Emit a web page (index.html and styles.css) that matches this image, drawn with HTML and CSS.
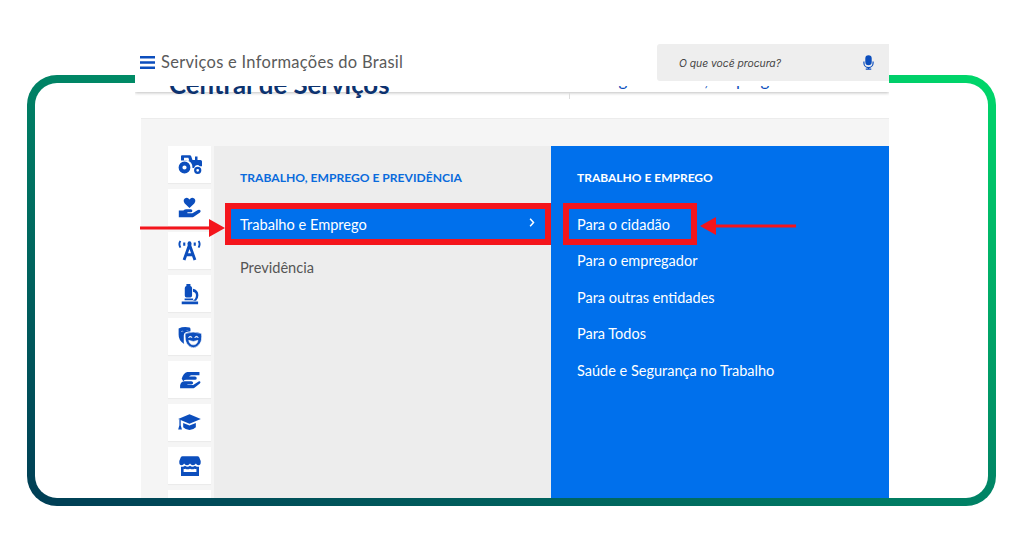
FILE: index.html
```html
<!DOCTYPE html>
<html lang="pt-BR">
<head>
<meta charset="utf-8">
<title>Serviços e Informações do Brasil</title>
<link rel="stylesheet" href="styles.css">
</head>
<body>
<div class="stage">
  <div class="frame"></div>
  <main class="shot">
    <header class="topbar">
      <div class="brand">
        <svg class="burger" viewBox="0 0 15 13" width="15" height="13"><path d="M0 0h15v2.600H0zM0 5.200h15v2.600H0zM0 10.400h15V13H0z"/></svg>
        <span class="brand-name">Serviços e Informações do Brasil</span>
      </div>
      <div class="search">
        <span class="search-text">O que você procura?</span>
        <svg class="mic" viewBox="0 0 12 16" width="11" height="15"><rect x="2.500" y="0" width="7" height="11" rx="3.500"/><path d="M1 7v1.500a5 5 0 0 0 10 0V7" fill="none" stroke="#0c4ebd" stroke-width="1.300"/><path d="M5.300 13h1.400v1.500H9V16H3v-1.500h2.300z"/></svg>
      </div>
    </header>
    <div class="title-row">
      <h1 class="page-title">Central de Serviços</h1>
      <span class="title-rule"></span>
      <div class="title-links">Navegue Central, Emprego</div>
    </div>
    <section class="panel">
      <nav class="rail">
        <a class="tile"><svg viewBox="0 0 24 19" width="24" height="19"><circle cx="6.500" cy="12.500" r="4" fill="none" stroke="#0c4ebd" stroke-width="3.800"/><circle cx="19.700" cy="15.300" r="2.500" fill="none" stroke="#0c4ebd" stroke-width="2.300"/><path fill-rule="evenodd" d="M3 6.500V1.300Q3 .3 4 .3h7.800q1.100 0 1.400 1L14.500 5H17V1.500h2.500V5h3q1.500 0 1.500 1.500v4.800h-2.200q-1-1.200-2.600-1.200-2.300 0-3.200 3h-1.500q0-7-6-7.600H3zM6 2.800v3h5.300l-.9-3z"/></svg></a>
        <a class="tile"><svg viewBox="0 0 24 22" width="23" height="21"><path d="M12 11.500 7 6.800Q4.800 3.800 7 1.700q2.800-2 5 .8 2.200-2.800 5-.8 2.200 2.100 0 5.100z"/><path d="M.8 14.200h4.700q1.600-1.400 3.500-1.300h4.200q2 .2 1.800 1.800-.1 1.200-1.800 1.300H9.800v1h5.200l5.800-3.400q2-.7 2.700.6.500 1.100-.5 2.100l-6.500 4.300q-1 .6-2.200.6H.8z"/></svg></a>
        <a class="tile"><svg viewBox="0 0 24 22" width="23" height="21"><path d="M12 5 6.300 21M12 5l5.700 16M8.500 15.500h7" fill="none" stroke="#0c4ebd" stroke-width="3"/><path d="M10 5.500h4V3.400a2 2 0 0 0-4 0z"/><path d="M2.500 1Q.3 4 2.500 8M21.500 1q2.200 3 0 7" fill="none" stroke="#0c4ebd" stroke-width="2"/><path d="M6.500 2.500v3.500M17.500 2.500v3.500" stroke="#0c4ebd" stroke-width="2.200"/></svg></a>
        <a class="tile"><svg viewBox="0 0 20 24" width="18" height="22"><path d="M6 .8h4.500V3q1.800.5 1.800 2.400v8.400q0 2.200-2 2.200H6.200q-2 0-2-2.200V5.400Q4.200 3.500 6 3z"/><path d="M13.300 6.300q6 1.200 6 7.200 0 3.700-2.500 6h-3.600q3.400-1.800 3.400-6 0-3-3.300-4z"/><path d="M4 17h9.500v2H4zM.8 20.300H19V23.500H.8z"/></svg></a>
        <a class="tile"><svg viewBox="0 0 25 23" width="24" height="22"><path fill-rule="evenodd" d="M.6 2.500Q5.500.3 12 1.500q1 .2 1 1.800v2.200q-3.300.3-5.400 1.300Q6 7.600 6 10v6.500q0 1 .4 2.200Q.4 15.500.6 9zM3.300 5.500Q4.500 4.300 6 5.800 4.600 5.200 3.300 6zM8.800 4.500q1.400-1 2.700.3-1.400-.5-2.700 0z"/><path fill-rule="evenodd" stroke="#fff" stroke-width=".6" d="M7.500 7.800q8-2.800 17 0 .8 7.500-1.600 10.400-3 4.300-6.900 4.600-4-.3-6.900-4.600Q7 15.300 7.500 7.800zM10.800 12q2-2.400 4 0-2-.9-4 0zm6.500 0q2-2.400 4 0-2-.9-4 0zM11.200 15q4.800 2.300 9.600 0-.8 4.700-4.800 4.700T11.200 15z"/></svg></a>
        <a class="tile"><svg viewBox="0 0 24 20" width="22" height="18"><path d="M2.800 8.500Q4.500 2 9 1h13.500v3.800H13.500q-1.800.2-2.500 1.400h6.500q2 0 2 1.800 0 1.800-2 1.800H8q-2.500 0-3.500 1.500z"/><path d="M1 15.800q1-4.500 5-4.500h7.500q1.800 0 2 1.700 0 1.700-2 1.900H8.600q1 .7 2.400.7h4.500L22 11.500q1.500-.3 1.600 1.100 0 1-1 1.700L17 18.500q-1 .8-2 .8H1z"/></svg></a>
        <a class="tile"><svg viewBox="0 0 24 18" width="23" height="17"><path d="M12 .3 24 5.300 12 10.300 0 5.300z"/><path d="M5.300 9.500 12 12.300l6.700-2.800V14q-3 3-6.700 3T5.300 14z"/><path d="M1.300 6h1.400v6l1.300 4.500H0L1.300 12z"/></svg></a>
        <a class="tile"><svg viewBox="0 0 22 20" width="22" height="20"><path d="M3.500.3h15q1.200 0 1.700 1L21.700 5v1.500q0 2.800-2.200 2.800-1.900 0-2.600-1.700-.9 1.700-2.900 1.700-2 0-3-1.700-1 1.700-3 1.700-2 0-2.900-1.700-.7 1.700-2.600 1.700-2.200 0-2.200-2.800V5l1.500-3.700q.5-1 1.700-1z"/><path d="M2 10.700q2.700.6 4-1 2.500 2 5 0 2.500 2 5 0 1.300 1.600 4 1V20H2zM4.600 12.800v3.200h12.800v-3.200q-1 .4-1.800-.1-2.200 1.300-4.600 0-2.400 1.300-4.600 0-.8.500-1.800.1z" fill-rule="evenodd"/></svg></a>
        <a class="tile"></a>
      </nav>
      <div class="menu">
        <h2 class="menu-title">TRABALHO, EMPREGO E PREVIDÊNCIA</h2>
        <ul class="menu-list">
          <li class="menu-item active"><span>Trabalho e Emprego</span><svg class="chevron" viewBox="0 0 8 12" width="6" height="9"><path d="M1.500 1 6 6l-4.500 5" fill="none" stroke="#fff" stroke-width="2"/></svg></li>
          <li class="menu-item">Previdência</li>
        </ul>
      </div>
      <div class="submenu">
        <h2 class="submenu-title">TRABALHO E EMPREGO</h2>
        <ul class="submenu-list">
          <li>Para o cidadão</li>
          <li>Para o empregador</li>
          <li>Para outras entidades</li>
          <li>Para Todos</li>
          <li>Saúde e Segurança no Trabalho</li>
        </ul>
      </div>
    </section>
  </main>
  <div class="mark mark-left"></div>
  <div class="mark mark-right"></div>
  <svg class="arrow arrow-left" viewBox="0 0 85 18" width="85" height="18"><path d="M0 7.500h69V0l16 9-16 9v-7.500H0z"/></svg>
  <svg class="arrow arrow-right" viewBox="0 0 96 18" width="96" height="18"><path d="M96 7.500H16V0L0 9l16 9v-7.500h80z"/></svg>
</div>
</body>
</html>
```

FILE: styles.css
```css
* { box-sizing: border-box; }
html, body { margin: 0; padding: 0; background: #fff; }
body { font-family: "Lato", "Open Sans", sans-serif; overflow: hidden; }
.stage { position: relative; width: 1024px; height: 536px; overflow: hidden; background: #fff; }
.frame {
  position: absolute; left: 27px; top: 75px; width: 969px; height: 431px;
  border: 8px solid transparent; border-radius: 30px;
  background: linear-gradient(#fff, #fff) padding-box,
    linear-gradient(to top right, #003d55 0%, #008265 50%, #00d86a 100%) border-box;
}
.shot { position: absolute; left: 135px; top: 43px; width: 754px; height: 455px; display: flex; flex-direction: column; background: #fff; overflow: hidden; }
.topbar { position: relative; z-index: 2; flex: 0 0 49px; display: flex; justify-content: space-between; align-items: flex-start; background: #fff; box-shadow: 0 1px 3px rgba(0,0,0,.25); }
.brand { display: flex; align-items: center; gap: 6px; padding: 13px 0 0 5px; }
.burger { fill: #0c4ebd; }
.brand-name { font-size: 16.500px; line-height: 13px; color: #5a5a5a; letter-spacing: .28px; }
.search { width: 232px; height: 37px; margin-top: 1px; display: flex; justify-content: space-between; align-items: center; padding: 0 15px 0 22px; background: #eee; border-radius: 3px 0 0 3px; }
.search-text { font-family: "Inter", sans-serif; font-style: italic; font-size: 10.300px; color: #444; }
.mic { fill: #0c4ebd; }
.title-row { position: relative; z-index: 3; flex: 0 0 32px; margin-top: -6px; display: flex; overflow: hidden; padding-left: 34px; }
.page-title { flex: 0 0 400px; margin: -16px 0 0; font-size: 25.800px; line-height: 28px; font-weight: 700; color: #0c326f; white-space: nowrap; }
.title-rule { flex: 0 0 1px; height: 6px; margin-top: 7px; background: #ddd; }
.title-links { margin: -16px 0 0 10px; font-size: 17px; line-height: 20px; color: #0c4ebd; white-space: nowrap; }
.panel { flex: 1; margin-left: 6px; padding: 28px 0 0 27px; display: grid; grid-template-columns: 43px 340px 1fr; background: #f5f5f5; border-top: 1px solid #ececec; min-height: 0; }
.rail { display: flex; flex-direction: column; gap: 6px; margin-top: -1px; }
.tile { flex: 0 0 37px; display: flex; align-items: center; justify-content: center; background: #fff; box-shadow: 0 1px 1px rgba(0,0,0,.04); }
.tile svg { fill: #0c4ebd; }
.menu { margin: -1px 0 0 3px; background: #ededed; }
.menu-title { margin: 0; padding: 25px 0 0 26px; font-size: 12.100px; line-height: 14px; font-weight: 700; color: #0a6bdc; white-space: nowrap; }
.menu-list { list-style: none; margin: 24px 0 0; padding: 0; }
.menu-item { margin-left: 12px; height: 43px; padding: 0 16px 0 14px; display: flex; align-items: center; justify-content: space-between; font-size: 14.600px; color: #555; }
.menu-item.active { height: 30px; margin-bottom: 7px; background: #0070ec; color: #fff; }
.chevron { margin-bottom: 4px; }
.submenu { margin-top: -1px; background: #0070ec; color: #fff; padding: 25px 0 0 26px; }
.submenu-title { margin: 0; font-size: 12px; line-height: 14px; font-weight: 700; white-space: nowrap; }
.submenu-list { list-style: none; margin: 31px 0 0; padding: 0; display: flex; flex-direction: column; gap: 18.400px; font-size: 14.500px; line-height: 18px; }
.mark { position: absolute; top: 203px; height: 42px; border: 6px solid #f4151c; }
.mark-left { left: 225px; width: 326px; }
.mark-right { left: 563px; width: 134px; }
.arrow { position: absolute; fill: #f4151c; }
.arrow-left { left: 140px; top: 219px; }
.arrow-right { left: 700px; top: 217px; }
```
